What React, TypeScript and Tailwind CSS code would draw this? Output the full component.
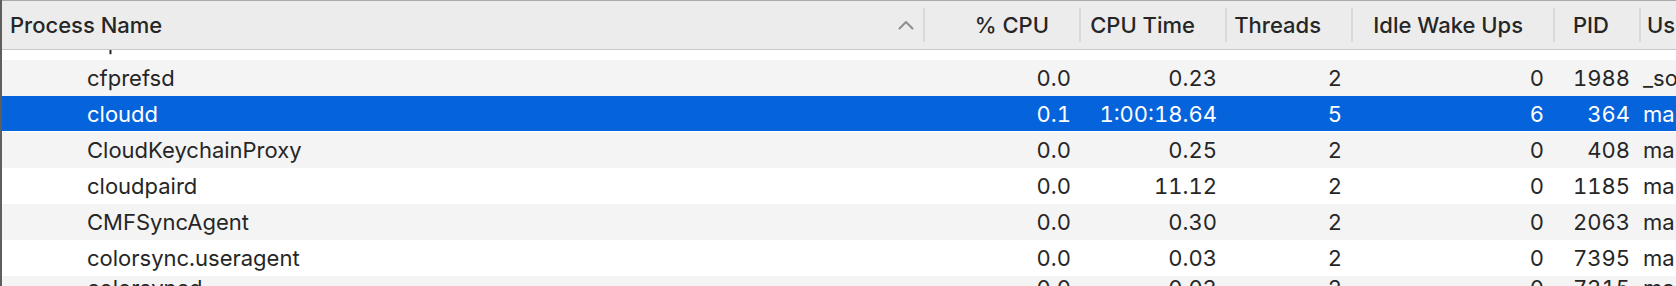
import React from "react";

type Row = {
  name: string;
  cpu: string;
  time: string;
  threads: string;
  idle: string;
  pid: string;
  user: string;
  selected?: boolean;
};

const rows: Row[] = [
  { name: "cfprefsd", cpu: "0.0", time: "1.52", threads: "3", idle: "0", pid: "1923", user: "root" },
  { name: "cfprefsd", cpu: "0.0", time: "0.23", threads: "2", idle: "0", pid: "1988", user: "_softwareupdate" },
  { name: "cloudd", cpu: "0.1", time: "1:00:18.64", threads: "5", idle: "6", pid: "364", user: "martin", selected: true },
  { name: "CloudKeychainProxy", cpu: "0.0", time: "0.25", threads: "2", idle: "0", pid: "408", user: "martin" },
  { name: "cloudpaird", cpu: "0.0", time: "11.12", threads: "2", idle: "0", pid: "1185", user: "martin" },
  { name: "CMFSyncAgent", cpu: "0.0", time: "0.30", threads: "2", idle: "0", pid: "2063", user: "martin" },
  { name: "colorsync.useragent", cpu: "0.0", time: "0.03", threads: "2", idle: "0", pid: "7395", user: "martin" },
  { name: "colorsyncd", cpu: "0.0", time: "0.03", threads: "2", idle: "0", pid: "7315", user: "martin" },
];

const Divider = () => <span className="w-[2px] h-[34px] shrink-0 bg-[#d9d9d9]" />;

const HeadCell = ({ label, width }: { label: string; width: string }) => (
  <div className={`flex items-center shrink-0 ${width}`}>
    <Divider />
    <span className="flex-1 text-right pr-[30px] whitespace-nowrap">{label}</span>
  </div>
);

const SortChevron = () => (
  <svg width="16" height="10" viewBox="0 0 16 10" fill="none">
    <path d="M1.5 8.5 L8 2 L14.5 8.5" stroke="#8e8e8e" strokeWidth="2" strokeLinecap="round" strokeLinejoin="round" />
  </svg>
);

const App: React.FC = () => {
  return (
    <div className="w-[1676px] h-[286px] overflow-hidden bg-white border-l-2 border-[#5e5e5e] font-['Inter','Liberation_Sans',sans-serif] text-[22px] text-[#262626]">
      <header className="flex h-[50px] bg-[#ececec] border-t border-b border-t-[#a9a9a9] border-b-[#c8c8c8] font-medium">
        <div className="flex items-center justify-between w-[921px] shrink-0 pl-[8px] pr-[9px]">
          <span>Process Name</span>
          <SortChevron />
        </div>
        <HeadCell label="% CPU" width="w-[156px]" />
        <HeadCell label="CPU Time" width="w-[146px]" />
        <HeadCell label="Threads" width="w-[126px]" />
        <HeadCell label="Idle Wake Ups" width="w-[202px]" />
        <HeadCell label="PID" width="w-[86px]" />
        <div className="flex items-center shrink-0 w-[120px]">
          <Divider />
          <span className="pl-[6px] whitespace-nowrap">User</span>
        </div>
      </header>

      <div className="h-[236px] overflow-hidden">
        <div className="flex flex-col -mt-[26px]">
          {rows.map((r, i) => {
            const last = i === rows.length - 1;
            return (
              <div
                key={i}
                className={`flex h-[36px] shrink-0 whitespace-nowrap tabular-nums ${
                  last ? "items-start" : "items-center"
                } ${
                  r.selected
                    ? "bg-[#0564dc] text-white shadow-[inset_0_-1px_0_#ffffff]"
                    : i % 2 === 0
                    ? "bg-white"
                    : "bg-[#f4f4f4]"
                }`}
              >
                <div className={`flex ${last ? "-mt-[4px]" : ""}`}>
                  <div className="w-[921px] shrink-0 pl-[85px]">{r.name}</div>
                  <div className="w-[156px] shrink-0 text-right pr-[8px]">{r.cpu}</div>
                  <div className="w-[146px] shrink-0 text-right pr-[8px]">{r.time}</div>
                  <div className="w-[126px] shrink-0 text-right pr-[9px]">{r.threads}</div>
                  <div className="w-[202px] shrink-0 text-right pr-[9px]">{r.idle}</div>
                  <div className="w-[86px] shrink-0 text-right pr-[9px]">{r.pid}</div>
                  <div className="w-[120px] shrink-0 pl-[4px]">{r.user}</div>
                </div>
              </div>
            );
          })}
        </div>
      </div>
    </div>
  );
};

export default App;
